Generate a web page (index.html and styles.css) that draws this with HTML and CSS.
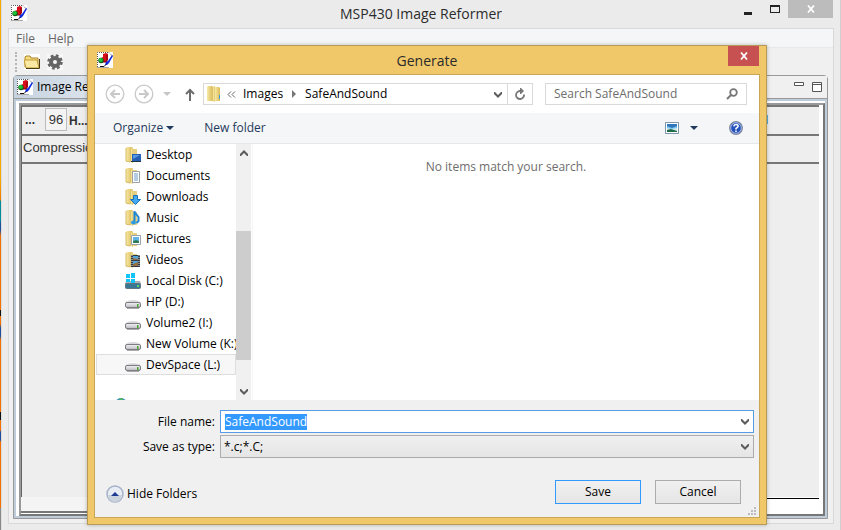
FILE: index.html
```html
<!DOCTYPE html>
<html lang="en">
<head>
<meta charset="utf-8">
<title>MSP430 Image Reformer</title>
<link rel="stylesheet" href="styles.css">
</head>
<body>
<svg class="defs" aria-hidden="true">
  <defs>
    <linearGradient id="gold" x1="0" x2="1"><stop offset="0" stop-color="#f8e9a6"/><stop offset="1" stop-color="#d9b955"/></linearGradient>
    <linearGradient id="gold2" x1="0" x2="1"><stop offset="0" stop-color="#c9aa50"/><stop offset=".4" stop-color="#f6e59c"/><stop offset="1" stop-color="#e2c970"/></linearGradient>
    <linearGradient id="metal" x1="0" x2="0" y1="0" y2="1"><stop offset="0" stop-color="#f4f4f6"/><stop offset="1" stop-color="#b9b9c0"/></linearGradient>
    <symbol id="app" viewBox="0 0 16 16">
      <path fill="#fff" d="M0 0h16v16H0z"/>
      <path d="M.5 15V.5H12L15.500 4M.5 15.500H12" fill="none" stroke="#555" stroke-dasharray="1 1"/>
      <path d="M6 2l3-1 2 1v6l-2 2H5V8H4V6l2-1z" fill="#d80d18"/><path d="M10 3v5l-1 2H5" stroke="#760006" fill="none"/>
      <circle cx="4" cy="8.500" r="2.700" fill="#0a5d14"/><circle cx="3.800" cy="8" r="2" fill="#20c53a"/>
      <path d="M15 3l1 1-4 7-2 2H8l1-3 2-1z" fill="#1028df"/><path d="M3 14.500h4l2-2" fill="none" stroke="#111"/>
    </symbol>
    <symbol id="lib" viewBox="0 0 16 16">
      <path d="M1 1l1-1h5l1 1v14H1z" fill="url(#gold)"/><path d="M5 2l3-1v15l-3-1z" fill="url(#gold2)"/>
      <path d="M8 2h4v13H8z" fill="#e6cf80"/><path d="M1 1v13l4 1" stroke="#d7bc68" fill="none"/>
    </symbol>
    <symbol id="drive" viewBox="0 0 16 16">
      <path d="M3 6h10l3 3H0z" fill="#d9d9dd"/><path d="M2 7c3-2 9-2 12 0" stroke="#fff" fill="none"/>
      <rect x=".5" y="8.500" width="15" height="5" rx="1.500" fill="url(#metal)" stroke="#7c7c82"/>
      <path d="M2 14.500h12" stroke="#aaa"/><path d="M12 10h1.500v3H12z" fill="#4aa92d"/>
    </symbol>
    <symbol id="chevron" viewBox="0 0 8 7"><path d="M0 1h1l3 3 3-3h1v2L4 7 0 3z" fill="#5c5c5c"/></symbol>
    <symbol id="cross" viewBox="0 0 8 8"><path d="M1 .5l6 7M7 .5l-6 7" fill="none" stroke="#fff" stroke-width="1.800"/></symbol>
  </defs>
</svg>

<div class="desktop">
<main class="window">
  <header class="titlebar">
    <svg class="i16 app-icon"><use href="#app"/></svg>
    <h1>MSP430 Image Reformer</h1>
    <div class="controls">
      <button class="ctl" aria-label="Minimize"><svg width="8" height="12"><path d="M0 9h8v3H0z" fill="#222"/></svg></button>
      <button class="ctl" aria-label="Maximize"><svg width="10" height="8"><path d="M0 0h10v8H0zM1 2v5h8V2z" fill="#222" fill-rule="evenodd"/></svg></button>
      <button class="ctl shut" aria-label="Close"><svg width="8" height="8"><use href="#cross"/></svg></button>
    </div>
  </header>
  <div class="client">
    <nav class="menu"><button>File</button><button>Help</button></nav>
    <div class="tools">
      <span class="grip"></span>
      <button aria-label="Open"><svg class="i16" viewBox="0 0 16 16"><path fill="#fff" d="M0 0h16v16H0z"/><path d="M1 13V3l1-1h4l1 2h7v9z" fill="#f6dc83" stroke="#ab8523"/><path d="M0 6h13l2 8H2z" fill="#fbe8a2" stroke="#c29a35"/><path d="M2 14.500h13.500V5" stroke="#483a13" fill="none"/></svg></button>
      <button aria-label="Settings"><svg class="i16" viewBox="0 0 16 16"><path fill="#f8f8f8" d="M0 0h16v16H0z"/><circle cx="8" cy="8" r="4" fill="none" stroke="#666" stroke-width="4"/><circle cx="8" cy="8" r="6.500" fill="none" stroke="#666" stroke-width="2.500" stroke-dasharray="2.800 2.300"/></svg></button>
    </div>
    <section class="view">
      <div class="tabs">
        <svg class="i16"><use href="#app"/></svg><span>Image Reformer</span>
        <div class="view-ctl">
          <button aria-label="Minimize view"><svg width="10" height="10"><path d="M.5.5h9v3h-9z" fill="#fff" stroke="#555"/></svg></button>
          <button aria-label="Maximize view"><svg width="10" height="10"><path d="M.5.5h9v9h-9zM1 2.500h8" fill="#fff" stroke="#555"/></svg></button>
        </div>
      </div>
      <div class="pane">
        <div class="sheet">
          <div class="fields"><b>...</b><input aria-label="Width" value="96"><b>H...</b><b class="last">I</b></div>
          <div class="compression">Compression</div>
          <div class="canvas"></div>
          <div class="status"><span></span><span></span></div>
        </div>
      </div>
    </section>
  </div>
</main>

<section class="dialog" role="dialog" aria-labelledby="dlg-title">
  <header class="dlg-title">
    <svg class="i16"><use href="#app"/></svg>
    <h2 id="dlg-title">Generate</h2>
    <button class="dlg-close" aria-label="Close dialog"><svg width="8" height="8"><use href="#cross"/></svg></button>
  </header>
  <div class="dlg-body">
    <div class="nav">
      <button aria-label="Back"><svg width="20" height="20" fill="none" stroke="#c9c9c9"><circle cx="10" cy="10" r="8.800" stroke-width="1.300"/><path d="M15 10H6M10 6l-4 4 4 4" stroke-width="2"/></svg></button>
      <button aria-label="Forward"><svg width="20" height="20" fill="none" stroke="#c9c9c9"><circle cx="10" cy="10" r="8.800" stroke-width="1.300"/><path d="M5 10h9M10 6l4 4-4 4" stroke-width="2"/></svg></button>
      <button aria-label="Recent locations"><svg width="8" height="4"><path d="M0 0h8L4 4z" fill="#c6c6c6"/></svg></button>
      <button class="up" aria-label="Up"><svg width="10" height="13" fill="none" stroke="#6d6d6d" stroke-width="2"><path d="M5 13V2M1 6l4-4 4 4"/></svg></button>
      <div class="address">
        <svg width="14" height="16" viewBox="0 0 14 16"><path d="M0 1l1-1h4l1 1v14H0z" fill="url(#gold)"/><path d="M5 1l3-1v16l-3-1z" fill="url(#gold2)"/><path d="M8 1h4l1 1v13H8z" fill="url(#gold)"/><path d="M12 9h1v4h-1z" fill="#3b9de0"/></svg>
        <svg class="laquo" width="9" height="7" fill="none" stroke="#666"><path d="M4 .5l-3 3 3 3M8 .5l-3 3 3 3"/></svg>
        <button>Images</button>
        <svg width="4" height="8"><path d="M0 0l4 4-4 4z" fill="#777"/></svg>
        <button>SafeAndSound</button>
        <button class="drop" aria-label="Previous locations"><svg width="8" height="7"><use href="#chevron"/></svg></button>
        <button class="refresh" aria-label="Refresh"><svg width="12" height="13" viewBox="0 0 12 13"><path d="M10 6.500A4 4 0 1 1 6 3" fill="none" stroke="#777" stroke-width="1.800"/><path d="M6 0h1l3 3-3 3H6z" fill="#777"/></svg></button>
      </div>
      <label class="search"><input type="text" placeholder="Search SafeAndSound" aria-label="Search SafeAndSound"><svg width="12" height="12" fill="none" stroke="#777"><circle cx="7.500" cy="4.500" r="3.300" stroke-width="1.800"/><path d="M5 7l-4 4" stroke-width="2"/></svg></label>
    </div>
    <div class="commands">
      <button>Organize <svg width="8" height="4"><path d="M0 0h8L4 4z" fill="#1e395b"/></svg></button>
      <button class="newf">New folder</button>
      <button class="picture" aria-label="Change view"><svg width="14" height="12"><path d="M.5.5h13v11H.5z" fill="#fff" stroke="#7b95ac"/><path d="M2 2h10v8H2z" fill="#79c4ee"/><path d="M2 2h10v2L7 6 2 4z" fill="#2f75bc"/><path d="M2 6l4 1 6-1v4H2z" fill="#cfe9ee"/><path d="M2 8l4-1 6 2v1H2z" fill="#236b48"/></svg></button>
      <button class="more" aria-label="More views"><svg width="8" height="4"><path d="M0 0h8L4 4z" fill="#1e395b"/></svg></button>
      <button class="help" aria-label="Get help"><svg width="14" height="14"><circle cx="7" cy="7" r="6.300" fill="#2450bd" stroke="#7e8799" stroke-width="1.200"/><circle cx="7" cy="7" r="5.300" fill="none" stroke="#c7d6f7" stroke-width=".8"/><path d="M4.800 5.300Q5 3.500 7 3.500t2.200 1.600Q9.200 6.200 7 7.500V8.500M7 9.500V11" fill="none" stroke="#fff" stroke-width="1.600"/></svg></button>
    </div>
    <div class="browser">
      <ul class="tree">
        <li><svg class="i16"><use href="#lib"/><path d="M7 7h9v7H7z" fill="#245fb5"/><path d="M8 8h7l-7 4z" fill="#5a9ae4"/><path d="M6 14.500h10" stroke="#234"/></svg>Desktop</li>
        <li><svg class="i16"><use href="#lib"/><path d="M7.500 3.500h7v11h-7z" fill="#fff" stroke="#98a0a8"/><path d="M9 6h4M9 8h4M9 10h4M9 12h4" stroke="#6997cb"/></svg>Documents</li>
        <li><svg class="i16"><use href="#lib"/><path d="M8.500 6.500h4v4h3l-5 5-5-5h3z" fill="#43aaf0" stroke="#1671b9"/></svg>Downloads</li>
        <li><svg class="i16"><use href="#lib"/><path d="M9.500 1v10M9.500 2l4 5v4l-2 2" fill="none" stroke="#1d88d6" stroke-width="2"/><ellipse cx="8.500" cy="12.500" rx="2.500" ry="2" fill="#2d9ae4"/></svg>Music</li>
        <li><svg class="i16"><use href="#lib"/><path d="M6.500 4.500h9v9h-9z" fill="#fff" stroke="#9ba3aa"/><path d="M8 6h6v6H8z" fill="#63b5e6"/><path d="M8 10l3-1 3 1v2H8z" fill="#2e7c5c"/></svg>Pictures</li>
        <li><svg class="i16"><use href="#lib"/><path d="M6 3h9v12H6z" fill="#353b43"/><path d="M8 4h5v4H8zM8 9h5v5H8z" fill="#51a5d8"/><path d="M8 12l5-2v4H8zM8 6l5 1v1H8z" fill="#976f43"/><path d="M7 3v12M14 3v12" stroke="#ddd" stroke-dasharray="1 1"/></svg>Videos</li>
        <li><svg class="i16"><path d="M1 8h14l1 3H0z" fill="#a8b3bb"/><rect x=".5" y="10.500" width="15" height="5" rx="1" fill="#397795" stroke="#65747d"/><path d="M12 12h2v2h-2z" fill="#59dc67"/><path d="M1 1h4v4H1zM6 0h4v5H6zM1 6h4v3H1zM6 6h4v4H6z" fill="#12c4fa"/></svg>Local Disk (C:)</li>
        <li><svg class="i16"><use href="#drive"/></svg>HP (D:)</li>
        <li><svg class="i16"><use href="#drive"/></svg>Volume2 (I:)</li>
        <li><svg class="i16"><use href="#drive"/></svg>New Volume (K:)</li>
        <li class="current"><svg class="i16"><use href="#drive"/></svg>DevSpace (L:)</li>
        <li class="network"><svg class="i16"><circle cx="8" cy="7" r="6" fill="#378ac0"/><path d="M6 1h4v3H7z" fill="#53b36d"/></svg></li>
      </ul>
      <div class="scroll">
        <svg width="8" height="7"><path d="M0 6h1l3-3 3 3h1V4L4 0 0 4z" fill="#5c5c5c"/></svg>
        <span class="thumb"></span>
        <svg width="8" height="7"><use href="#chevron"/></svg>
      </div>
      <p class="empty">No items match your search.</p>
    </div>
    <div class="save-area">
      <div class="fieldgrid">
        <label for="filename">File name:</label>
        <div class="combo name"><input id="filename" type="text" value="SafeAndSound" spellcheck="false" autofocus><svg width="8" height="7"><use href="#chevron"/></svg></div>
        <label for="filetype">Save as type:</label>
        <div class="combo type"><select id="filetype"><option>*.c;*.C;</option></select><svg width="8" height="7"><use href="#chevron"/></svg></div>
      </div>
      <div class="actions">
        <button class="hide"><svg width="18" height="18"><circle cx="9" cy="9" r="8" fill="#e8edf3" stroke="#a5b2c9" stroke-width="1.500"/><path d="M2 10h14a7 7 0 0 1-14 0z" fill="#cbd3dc"/><path d="M5 11h8L9 7z" fill="#1d3b91"/></svg>Hide Folders</button>
        <button class="push primary">Save</button>
        <button class="push">Cancel</button>
      </div>
      <svg class="resize" width="8" height="8"><path d="M6 0h2v2H6zM3 3h2v2H3zM6 3h2v2H6zM0 6h2v2H0zM3 6h2v2H3zM6 6h2v2H6z" fill="#bcbcbc"/></svg>
    </div>
  </div>
</section>
</div>
<script src="script.js"></script>
</body>
</html>
```
FILE: styles.css
```css
* { box-sizing: border-box; }
body { margin: 0; font: 12px/16px "Open Sans", "Noto Sans", sans-serif; color: #000; }
button, input, select { font: inherit; color: inherit; margin: 0; padding: 0; border: 0; background: none; border-radius: 0; outline: 0; }
button { display: inline-flex; align-items: center; justify-content: center; white-space: nowrap; }
svg { display: block; flex: none; }
.defs { position: absolute; width: 0; height: 0; }
.i16 { width: 16px; height: 16px; }
h1, h2 { margin: 0; font-weight: 400; font-size: 14px; line-height: 20px; color: #2b2b2b; }

.desktop { position: relative; height: 100vh; min-height: 480px; overflow: hidden; padding-left: 1px; display: flex;
  background: linear-gradient(#f5a800 0 180px, #f07800 200px, #008d98 201px 220px, #1b4f9d 224px 230px, #f07000 236px 310px, #111 310px 316px, #f07000 316px 324px, #1b4f9d 328px 336px, #f07000 340px 412px, #111 412px 420px, #f07000 420px 430px, #1b4f9d 432px 440px, #f07000 442px 508px, #888 508px); }
.window { flex: 1; display: flex; flex-direction: column; padding: 0 6px 6px; background: #ebebeb; border-right: 1px solid #cfcfcf; border-left: 1px solid #ddd; }
.titlebar { height: 28px; display: grid; grid-template-columns: 100px 1fr 100px; align-items: start; }
.titlebar .app-icon { margin: 5px 0 0 3px; }
.titlebar h1 { text-align: center; padding-top: 4px; }
.controls { display: flex; justify-content: flex-end; padding-right: 1px; }
.ctl { width: 27px; height: 18px; flex: none; }
.ctl.shut { width: 45px; background: #bcbcbc; }
.client { flex: 1; display: flex; flex-direction: column; border: 1px solid #d9d9d9; background: #f0f0f0; }
.menu { height: 19px; background: #f5f6f7; border-bottom: 1px solid #e7e9eb; display: flex; gap: 13px; padding-left: 7px; color: #666; }
.menu button { height: 20px; }
.tools { height: 27px; display: flex; align-items: center; gap: 7px; padding-left: 6px; }
.grip { height: 20px; border-left: 2px dotted #b5b5b5; }
.view { flex: 1; margin: 0 5px 4px 4px; display: flex; flex-direction: column; border: 1px solid #999; border-radius: 4px 4px 0 0; }
.tabs { height: 23px; display: flex; align-items: center; gap: 4px; padding: 0 5px 0 3px; border-bottom: 1px solid #999; white-space: nowrap; background: linear-gradient(90deg, #c5d2df, #dfe6ee 90px, #f0f0f0 180px); }
.view-ctl { margin-left: auto; display: flex; gap: 8px; }
.pane { flex: 1; display: flex; border: 2px solid #bfcddb; background: #fff; padding: 2px 0 0 3px; font-family: "Liberation Sans", sans-serif; font-size: 13px; color: #333; }
.sheet { flex: 1; display: flex; flex-direction: column; border: 2px solid #999; border-right-color: #777; border-bottom-color: #777; }
.fields, .compression, .canvas { background: #eee; border-top: 2px solid #777; border-left: 1px solid #666; margin-right: 4px; }
.fields { height: 29px; display: flex; align-items: center; gap: 2px; padding: 0 1px 2px 3px; }
.fields b { font-size: 12px; line-height: 16px; width: 18px; }
.fields input { width: 22px; height: 23px; border: 1px solid #bbb; text-align: center; background: #f4f4f4; }
.fields b:nth-of-type(2) { width: auto; padding-top: 2px; }
.fields .last { width: auto; margin-left: auto; padding-right: 50px; color: #00264d; }
.compression { height: 28px; padding: 4px 1px; }
.canvas { flex: 1; }
.status { height: 17px; display: flex; }
.status span { flex: 1; background: #f4f4f4; border-bottom: 2px solid #777; margin-bottom: 1px; }
.status span + span { background: #fff; border: solid #000; border-width: 1px 0 0; margin: 1px 4px 0 0; }

.dialog { position: absolute; inset: 45px 74px 5px 87px; display: flex; flex-direction: column; padding: 0 7px 7px; background: #f0c869; border: 1px solid #b79a55; box-shadow: 0 0 4px #0004; }
.dlg-title { height: 29px; display: grid; grid-template-columns: 50px 1fr 50px; align-items: start; }
.dlg-title svg.i16 { margin: 6px 0 0 2px; }
.dlg-title h2 { text-align: center; padding-top: 5px; }
.dlg-close { width: 31px; height: 20px; background: #c75050; justify-self: end; }
.dlg-body { flex: 1; display: flex; flex-direction: column; min-height: 0; background: #fff; outline: 1px solid #c9a654; }
.nav { height: 38px; display: flex; align-items: center; padding: 0 12px 0 10px; }
.nav > button { margin-right: 9px; }
.nav > .up { margin: 0 8px 0 5px; }
.address { flex: 325; height: 22px; border: 1px solid #d9d9d9; display: flex; align-items: center; padding-left: 3px; }
.address .laquo { margin: 0 7px 0 6px; }
.address button + svg { margin: 0 9px; }
.address .drop { margin-left: auto; width: 18px; height: 20px; }
.address .refresh { width: 25px; height: 20px; border-left: 1px solid #d9d9d9; }
.search { flex: 184; height: 22px; margin-left: 12px; border: 1px solid #d9d9d9; display: flex; align-items: center; padding: 0 8px; }
.search input { flex: 1; min-width: 0; }
.search input::placeholder { color: #6d6d6d; opacity: 1; }
.commands { height: 31px; background: #f5f6f7; border-bottom: 1px solid #e5e8eb; display: flex; align-items: center; padding: 0 16px 0 18px; color: #1e395b; }
.commands button { gap: 3px; }
.commands .newf { margin-left: 30px; }
.commands .picture { margin-left: auto; }
.commands .more { margin: 0 31px 0 11px; }
.browser { flex: 1; min-height: 0; display: flex; overflow: hidden; }
.tree { width: 141px; margin: 0; padding: 0 0 0 1px; list-style: none; overflow: hidden; }
.tree li { height: 21px; display: flex; align-items: center; gap: 5px; padding-left: 28px; border: 1px solid transparent; white-space: nowrap; }
.tree .current { background: #f7f7f7; border-color: #dedede; }
.tree .network { margin-top: 19px; padding-left: 16px; }
.scroll { width: 15px; background: #f0f0f0; display: flex; flex-direction: column; align-items: center; padding: 6px 0 5px; }
.scroll .thumb { width: 15px; flex: 129; margin: 74px 0 28px; background: #cdcdcd; }
.empty { flex: 1; margin: 0 0 0 1px; padding: 15px 0 0; border-left: 1px solid #f4f4f4; text-align: center; color: #6d6d6d; }
.save-area { height: 117px; position: relative; background: #f0f0f0; padding: 10px 5px 0 0; }
.fieldgrid { display: grid; grid-template-columns: 120px 1fr; column-gap: 5px; row-gap: 2px; align-items: center; }
.fieldgrid label { text-align: right; }
.combo { height: 23px; display: flex; align-items: center; border: 1px solid #569de5; background: #fff; padding: 0 4px; }
.combo.type { border-color: #acacac; background: linear-gradient(#f0f0f0, #e5e5e5); padding-left: 3px; }
.combo input, .combo select { flex: 1; min-width: 0; appearance: none; }
.combo input::selection { background: #3399ff; color: #fff; }
.actions { display: flex; align-items: flex-start; gap: 14px; margin-top: 22px; padding: 0 13px 0 11px; }
.hide { gap: 3px; margin: 5px auto 0 0; }
.push { width: 86px; height: 24px; border: 1px solid #acacac; background: linear-gradient(#f0f0f0, #e5e5e5); }
.primary { border-color: #3399ff; }
.resize { position: absolute; right: 3px; bottom: 2px; }
```
FILE: script.js
```js
const filename = document.getElementById("filename");
filename.focus();
filename.select();
```
